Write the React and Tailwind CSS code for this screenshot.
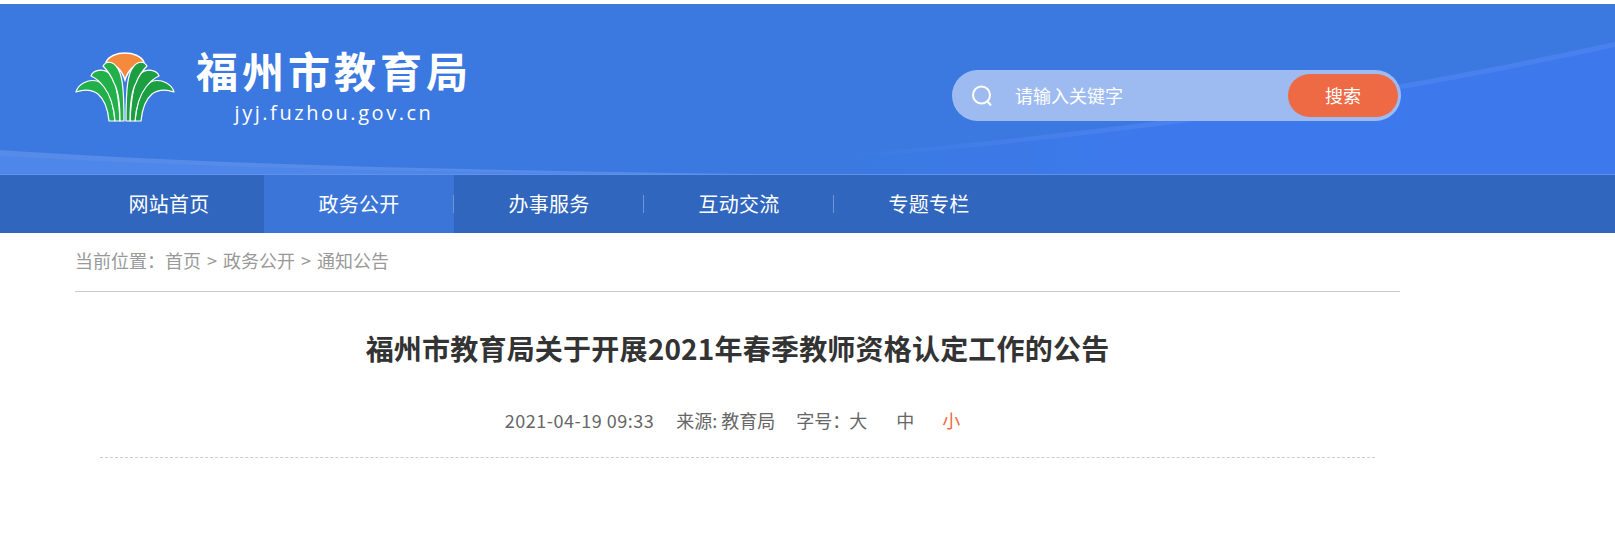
const fontStack = { fontFamily: '"Noto Sans CJK SC", "Noto Sans", sans-serif' };

const navItems = ["网站首页", "政务公开", "办事服务", "互动交流", "专题专栏"];

function Logo() {
  const half = (
    <>
      <path d="M6 52 C8 44 18 39 27 41 C38 44 43 62 45 81 L39 81 C38 70 35 60 28 54 C21 49 12 50 6 52Z" />
      <path d="M21 36 C23 30 33 28 39 33 C46 39 49 60 50 81 L45 81 C44 68 41 56 34 47 C30 42 26 38 21 36Z" />
      <path d="M33 26 C36 21 42 21 46 26 C52 32 54 46 54 81 L50 81 C50 64 48 50 44 43 C41 35 37 30 33 26Z" />
    </>
  );
  return (
    <svg width="120" height="90" viewBox="0 0 120 90" className="shrink-0">
      <path
        d="M36 22 C42 10 68 10 74 22 C65 24 58 30 55 40 C52 30 45 24 36 22Z"
        fill="#f58a3c"
        stroke="#fff"
        strokeWidth="1.5"
      />
      <g fill="#22b04a" stroke="#fff" strokeWidth="1.2" strokeLinejoin="round">
        {half}
      </g>
      <g
        fill="#1c9f42"
        stroke="#fff"
        strokeWidth="1.2"
        strokeLinejoin="round"
        transform="translate(110 0) scale(-1 1)"
      >
        {half}
      </g>
    </svg>
  );
}

function Waves() {
  return (
    <svg
      className="absolute inset-0 h-full w-full"
      viewBox="0 0 1615 170"
      preserveAspectRatio="none"
    >
      <defs>
        <linearGradient id="fadeIn" x1="850" y1="0" x2="1150" y2="0" gradientUnits="userSpaceOnUse">
          <stop offset="0" stopColor="#3d79ec" stopOpacity="0" />
          <stop offset="1" stopColor="#3d79ec" stopOpacity="1" />
        </linearGradient>
        <linearGradient id="fadeLine" x1="850" y1="0" x2="1150" y2="0" gradientUnits="userSpaceOnUse">
          <stop offset="0" stopColor="#6b99f0" stopOpacity="0" />
          <stop offset="1" stopColor="#5a8df0" stopOpacity="0.4" />
        </linearGradient>
      </defs>
      <path d="M850 150 C1150 125 1400 85 1615 38 L1615 170 L850 170Z" fill="url(#fadeIn)" />
      <path d="M850 150 C1150 125 1400 85 1615 38 L1615 43 C1400 90 1150 130 850 154Z" fill="url(#fadeLine)" />
      <path d="M0 146 C200 160 450 166 760 170 L0 170Z" fill="#6d9bef" opacity="0.55" />
      <path d="M0 152 C250 166 450 168 640 170 L0 170Z" fill="#4c84ea" opacity="0.8" />
    </svg>
  );
}

export default function App() {
  return (
    <div className="min-h-[538px] bg-white pt-1" style={fontStack}>
      <div className="relative h-[170px] overflow-hidden bg-[#3b79e1]">
        <Waves />
        <div className="relative flex h-full items-start pl-[70px]">
          <div className="mt-9 flex">
            <Logo />
            <div className="ml-1 flex w-[280px] flex-col items-center text-white">
              <div className="mt-[-1px] text-[42px] leading-[62px] font-bold tracking-[4px] whitespace-nowrap">
                福州市教育局
              </div>
              <div
                className="mt-[-2px] text-[20px] leading-7 font-medium tracking-[2.55px]"
                style={{ fontFamily: '"Open Sans", sans-serif' }}
              >
                jyj.fuzhou.gov.cn
              </div>
            </div>
          </div>
          <div className="ml-[478px] mt-[66px] flex h-[51px] w-[449px] items-center rounded-full bg-[#9dbbf1] pr-[3px] pl-[18px]">
            <svg width="24" height="24" viewBox="0 0 24 24" fill="none" stroke="#fff" strokeWidth="2" strokeLinecap="round">
              <circle cx="11.5" cy="11" r="8.5" />
              <path d="M18 18 L20.5 21" />
            </svg>
            <span className="ml-[21px] text-[18px] text-white">请输入关键字</span>
            <button className="ml-auto h-[43px] w-[110px] rounded-full bg-[#ee6a45] text-[18px] text-white">
              搜索
            </button>
          </div>
        </div>
      </div>

      <nav className="h-[59px] border-t border-[#5f90ec] bg-[#3066bd]">
        <ul className="ml-[74px] flex h-full">
          {navItems.map((item, i) => (
            <li
              key={item}
              className={`relative flex w-[190px] items-center justify-center text-[20px] tracking-[0.2px] text-white ${
                i === 1 ? "bg-[#3b75d8]" : ""
              }`}
            >
              {item}
              {i > 0 && i < 4 && <span className="absolute top-5 right-0 h-[18px] w-px bg-[#6f96d6]" />}
            </li>
          ))}
        </ul>
      </nav>

      <main className="ml-[75px] w-[1325px]">
        <div className="flex h-[59px] items-center gap-[6px] border-b border-[#cccccc] pb-[3px] text-[18px] whitespace-pre text-[#999999]">
          <span className="mr-[-6px]">当前位置：</span>
          <span>首页</span>
          <span>&gt;</span>
          <span>政务公开</span>
          <span>&gt;</span>
          <span>通知公告</span>
        </div>
        <h1 className="mt-[32px] text-center text-[28px] leading-[48px] font-bold tracking-[0.2px] text-[#333333]">
          福州市教育局关于开展2021年春季教师资格认定工作的公告
        </h1>
        <div className="mx-[25px] mt-[36px] flex h-[50px] items-center justify-center border-b border-dashed border-[#cccccc] pb-[25px] pr-[10px] text-[18px] text-[#666666]">
          <span className="tracking-[0.5px]">2021-04-19 09:33</span>
          <span className="ml-[22px]">来源: 教育局</span>
          <span className="ml-[21px]">字号：</span>
          <span className="ml-[-1px]">大</span>
          <span className="ml-[29px]">中</span>
          <span className="ml-[28px] text-[#ee6a45]">小</span>
        </div>
      </main>
    </div>
  );
}
